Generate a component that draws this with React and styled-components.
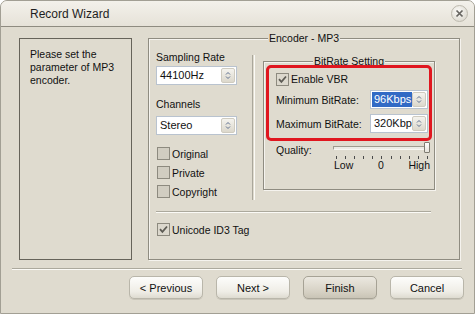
import React from "react";
import styled, { createGlobalStyle } from "styled-components";

const BG = "#dfdbcf";

const GlobalStyle = createGlobalStyle`
  html, body {
    margin: 0;
    padding: 0;
    background: #ffffff;
  }
  body {
    font-family: "Liberation Sans", Arial, sans-serif;
    font-size: 10.5px;
    color: #111;
  }
`;

const Window = styled.div`
  box-sizing: border-box;
  width: 475px;
  height: 314px;
  display: flex;
  flex-direction: column;
  background: ${BG};
  border: 1px solid #a29f94;
  border-radius: 7px 7px 0 0;
  overflow: hidden;
`;

const TitleBar = styled.div`
  box-sizing: border-box;
  height: 26px;
  flex: none;
  display: flex;
  align-items: center;
  justify-content: space-between;
  padding: 0 6px 0 29px;
  background: linear-gradient(#f3f1eb, #e6e2d8);
  border-bottom: 1px solid #8e8b80;
`;

const Title = styled.span`
  font-size: 12px;
  color: #1e1e1e;
`;

const CloseButton = styled.div`
  box-sizing: border-box;
  width: 17px;
  height: 17px;
  border-radius: 50%;
  display: flex;
  align-items: center;
  justify-content: center;
  background: radial-gradient(circle at 40% 35%, #fbfaf7, #d6d2c7);
  border: 1px solid #bdb9ae;
`;

const Body = styled.div`
  display: flex;
  gap: 16px;
  padding: 11px 0 0 18px;
`;

const InfoPanel = styled.div`
  box-sizing: border-box;
  width: 113px;
  height: 222px;
  padding: 9px 0 0 10px;
  border: 1px solid #66635a;
  line-height: 13px;
`;

const GroupBox = styled.div`
  box-sizing: border-box;
  width: ${(p) => p.$w}px;
  height: ${(p) => p.$h}px;
  display: flex;
  flex-direction: column;
  border: 1px solid #8f8c81;
  box-shadow: inset 1px 1px 0 #f5f3ee, 1px 1px 0 #f5f3ee;
  margin: ${(p) => p.$m || 0};
`;

const Legend = styled.span`
  align-self: center;
  margin-top: -7px;
  padding: 0 1px;
  line-height: 13px;
  background: ${BG};
`;

const TopRow = styled.div`
  display: flex;
  align-items: flex-start;
  margin-top: 6px;
  padding-left: 7px;
`;

const Column = styled.div`
  width: 82px;
  display: flex;
  flex-direction: column;
`;

const FieldLabel = styled.div`
  line-height: 13px;
  margin-top: ${(p) => p.$mt || 0}px;
`;

const VSep = styled.div`
  width: 1px;
  height: 145px;
  margin: 4px 8px 0 14px;
  border-left: 1px solid #aaa79b;
  border-right: 1px solid #fbfaf6;
`;

const HSep = styled.div`
  width: ${(p) => p.$w}px;
  height: 0;
  margin: ${(p) => p.$m};
  border-top: 1px solid #aca99d;
  border-bottom: 1px solid #fbfaf6;
`;

const SelectBox = styled.div`
  box-sizing: border-box;
  width: ${(p) => p.$w}px;
  height: 19px;
  margin-top: ${(p) => p.$mt || 0}px;
  display: flex;
  align-items: center;
  padding: 1px;
  background: #ffffff;
  border: 1px solid #b9c3cf;
  font-size: 11px;
`;

const SelectText = styled.span`
  flex: 1;
  height: 15px;
  line-height: 15px;
  padding-left: 2px;
  overflow: hidden;
  white-space: nowrap;
  background: ${(p) => (p.$hl ? "#316ac5" : "transparent")};
  color: ${(p) => (p.$hl ? "#ffffff" : "#111")};
`;

const SpinButton = styled.span`
  box-sizing: border-box;
  width: 14px;
  height: 15px;
  flex: none;
  display: flex;
  align-items: center;
  justify-content: center;
  border-radius: 2px;
  background: linear-gradient(#f4f3ee, #dcd8cc);
  border: 1px solid #cfcbbf;
`;

const CheckRow = styled.div`
  display: flex;
  align-items: center;
  gap: 2px;
  height: ${(p) => p.$h || 19}px;
  margin: ${(p) => p.$m || 0};
`;

const CheckSquare = styled.span`
  box-sizing: border-box;
  width: 13px;
  height: 13px;
  flex: none;
  display: flex;
  align-items: center;
  justify-content: center;
  border: 1px solid #8d8a7f;
  background: ${(p) => (p.$checked ? "#dcd8cd" : "#d1cdc1")};
`;

const RedFrame = styled.div`
  box-sizing: border-box;
  height: 76px;
  margin: -3px 2px 0 2px;
  padding: 3px 1px 0 7px;
  border: 3px solid #e0161f;
  border-radius: 5px;
  display: flex;
  flex-direction: column;
`;

const RateRow = styled.div`
  display: flex;
  align-items: center;
  justify-content: space-between;
  margin-top: ${(p) => p.$mt}px;
`;

const QualityRow = styled.div`
  display: flex;
  align-items: flex-start;
  padding-left: 12px;
`;

const QualityLabel = styled.span`
  width: 57px;
  line-height: 13px;
  margin-top: 3px;
`;

const Slider = styled.div`
  width: 97px;
  margin-top: 1px;
  display: flex;
  flex-direction: column;
`;

const TrackRow = styled.div`
  height: 11px;
  display: flex;
  align-items: center;
`;

const Track = styled.div`
  flex: 1;
  height: 2px;
  border: 1px solid;
  border-color: #9d9a8f #f8f7f3 #f8f7f3 #9d9a8f;
  background: #ecebe6;
`;

const Thumb = styled.div`
  box-sizing: border-box;
  width: 6px;
  height: 11px;
  margin-left: -1px;
  background: linear-gradient(#ffffff, #e6e3da);
  border: 1px solid #7e7b71;
  border-radius: 1px;
`;

const Ticks = styled.div`
  display: flex;
  justify-content: space-between;
  padding: 0 2px 0 3px;
  margin-top: 3px;
`;

const Tick = styled.span`
  width: 1px;
  height: 3px;
  background: #4a4a4a;
`;

const TickLabels = styled.div`
  display: flex;
  justify-content: space-between;
  line-height: 12px;
  padding-left: 1px;
`;

const Footer = styled.div`
  display: flex;
  flex-direction: column;
`;

const ButtonRow = styled.div`
  display: flex;
  justify-content: flex-end;
  gap: 13px;
  padding-right: 10px;
  margin-top: 6px;
`;

const Button = styled.div`
  box-sizing: border-box;
  width: 74px;
  height: 23px;
  display: flex;
  align-items: center;
  justify-content: center;
  font-size: 11px;
  border-radius: 5px;
  border: 1px solid ${(p) => (p.$active ? "#a6a295" : "#b9b6aa")};
  background: ${(p) =>
    p.$active
      ? "linear-gradient(#ebe8e0, #d6d1c4 70%, #c9c4b6)"
      : "linear-gradient(#fdfdfb, #efede6 70%, #dedbd0)"};
  box-shadow: 0 1px 0 #c9c5b9;
`;

const SpinIcon = () => (
  <svg width="6" height="9" viewBox="0 0 6 9">
    <path d="M1 3.5 L3 1.5 L5 3.5 M1 5.5 L3 7.5 L5 5.5" fill="none" stroke="#5d6f8f" strokeWidth="1" />
  </svg>
);

const CheckMark = () => (
  <svg width="9" height="9" viewBox="0 0 9 9">
    <path d="M1 4.2 L3.4 6.8 L8 1.5" fill="none" stroke="#5e5c55" strokeWidth="1.8" />
  </svg>
);

const Select = ({ value, width, highlight, mt }) => (
  <SelectBox $w={width} $mt={mt}>
    <SelectText $hl={highlight}>{value}</SelectText>
    <SpinButton>
      <SpinIcon />
    </SpinButton>
  </SelectBox>
);

const Check = ({ label, checked, h, m }) => (
  <CheckRow $h={h} $m={m}>
    <CheckSquare $checked={checked}>{checked ? <CheckMark /> : null}</CheckSquare>
    <span>{label}</span>
  </CheckRow>
);

export default function App() {
  const ticks = Array.from({ length: 11 });
  return (
    <>
      <GlobalStyle />
      <Window>
        <TitleBar>
          <Title>Record Wizard</Title>
          <CloseButton>
            <svg width="9" height="9" viewBox="0 0 9 9">
              <path d="M1.5 1.5 L7.5 7.5 M7.5 1.5 L1.5 7.5" stroke="#666460" strokeWidth="1.7" />
            </svg>
          </CloseButton>
        </TitleBar>

        <Body>
          <InfoPanel>
            Please set the
            <br />
            parameter of MP3
            <br />
            encoder.
          </InfoPanel>

          <GroupBox $w={312} $h={222}>
            <Legend>Encoder - MP3</Legend>
            <TopRow>
              <Column>
                <FieldLabel>Sampling Rate</FieldLabel>
                <Select value="44100Hz" width={81} mt={2} />
                <FieldLabel $mt={13}>Channels</FieldLabel>
                <Select value="Stereo" width={81} mt={5} />
                <Check label="Original" m="9px 0 0 1px" />
                <Check label="Private" m="0 0 0 1px" />
                <Check label="Copyright" m="0 0 0 1px" />
              </Column>
              <VSep />
              <GroupBox $w={172} $h={129} $m="10px 0 0 0">
                <Legend>BitRate Setting</Legend>
                <RedFrame>
                  <Check label="Enable VBR" checked h={16} />
                  <RateRow $mt={3}>
                    <span>Minimum BitRate:</span>
                    <Select value="96Kbps" width={58} highlight />
                  </RateRow>
                  <RateRow $mt={5}>
                    <span>Maximum BitRate:</span>
                    <Select value="320Kbps" width={58} />
                  </RateRow>
                </RedFrame>
                <QualityRow>
                  <QualityLabel>Quality:</QualityLabel>
                  <Slider>
                    <TrackRow>
                      <Track />
                      <Thumb />
                    </TrackRow>
                    <Ticks>
                      {ticks.map((_, i) => (
                        <Tick key={i} />
                      ))}
                    </Ticks>
                    <TickLabels>
                      <span>Low</span>
                      <span>0</span>
                      <span>High</span>
                    </TickLabels>
                  </Slider>
                </QualityRow>
              </GroupBox>
            </TopRow>
            <HSep $w={275} $m="10px 0 0 7px" />
            <Check label="Unicode ID3 Tag" checked m="7px 0 0 8px" />
          </GroupBox>
        </Body>

        <Footer>
          <HSep $w={450} $m="8px 0 0 11px" />
          <ButtonRow>
            <Button>&lt; Previous</Button>
            <Button>Next &gt;</Button>
            <Button $active>Finish</Button>
            <Button>Cancel</Button>
          </ButtonRow>
        </Footer>
      </Window>
    </>
  );
}
